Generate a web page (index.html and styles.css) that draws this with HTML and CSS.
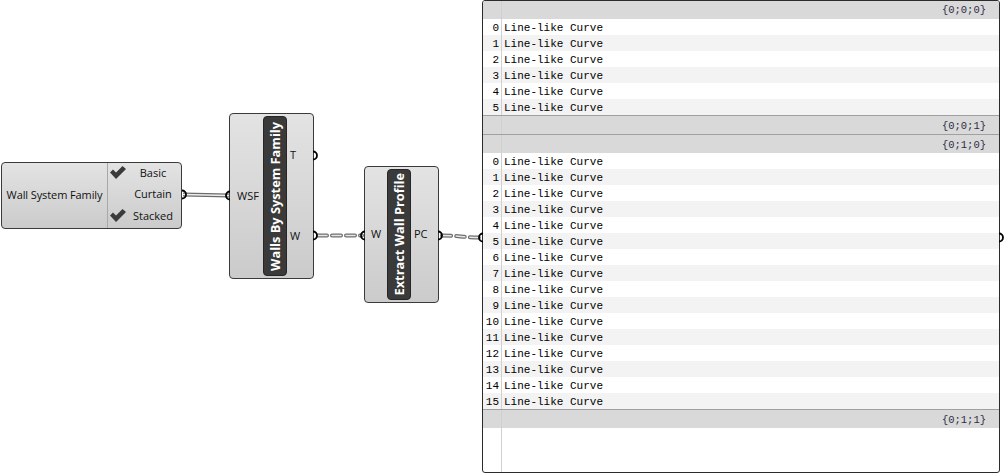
FILE: index.html
```html
<!DOCTYPE html>
<html>
<head>
<meta charset="utf-8">
<link rel="stylesheet" href="styles.css">
</head>
<body>
<div class="canvas">
  <div class="node wsf">
    <div class="wsf-name">Wall System Family</div>
    <div class="wsf-items">
      <div class="item"><svg class="check" viewBox="0 0 16 13"><polygon points="0,6.5 3,3.5 6,6.5 12.5,0 16,3 6,13"/></svg><span>Basic</span></div>
      <div class="item"><span class="check-empty"></span><span>Curtain</span></div>
      <div class="item"><svg class="check" viewBox="0 0 16 13"><polygon points="0,6.5 3,3.5 6,6.5 12.5,0 16,3 6,13"/></svg><span>Stacked</span></div>
    </div>
  </div>

  <div class="node walls">
    <div class="inputs walls-in"><span>WSF</span></div>
    <div class="bar"><span>Walls By System Family</span></div>
    <div class="outputs"><div class="port">T</div><div class="port">W</div></div>
  </div>

  <div class="node extract">
    <div class="inputs extract-in"><span>W</span></div>
    <div class="bar"><span>Extract Wall Profile</span></div>
    <div class="outputs"><div class="port">PC</div></div>
  </div>

  <div class="panel">
    <div class="row head first"><div class="idx"></div><div class="val path">{0;0;0}</div></div>
    <div class="row"><div class="idx">0</div><div class="val">Line-like Curve</div></div>
    <div class="row alt"><div class="idx">1</div><div class="val">Line-like Curve</div></div>
    <div class="row"><div class="idx">2</div><div class="val">Line-like Curve</div></div>
    <div class="row alt"><div class="idx">3</div><div class="val">Line-like Curve</div></div>
    <div class="row"><div class="idx">4</div><div class="val">Line-like Curve</div></div>
    <div class="row alt"><div class="idx">5</div><div class="val">Line-like Curve</div></div>
    <div class="row foot"><div class="idx"></div><div class="val path">{0;0;1}</div></div>
    <div class="row head sep"><div class="idx"></div><div class="val path">{0;1;0}</div></div>
    <div class="row"><div class="idx">0</div><div class="val">Line-like Curve</div></div>
    <div class="row alt"><div class="idx">1</div><div class="val">Line-like Curve</div></div>
    <div class="row"><div class="idx">2</div><div class="val">Line-like Curve</div></div>
    <div class="row alt"><div class="idx">3</div><div class="val">Line-like Curve</div></div>
    <div class="row"><div class="idx">4</div><div class="val">Line-like Curve</div></div>
    <div class="row alt"><div class="idx">5</div><div class="val">Line-like Curve</div></div>
    <div class="row"><div class="idx">6</div><div class="val">Line-like Curve</div></div>
    <div class="row alt"><div class="idx">7</div><div class="val">Line-like Curve</div></div>
    <div class="row"><div class="idx">8</div><div class="val">Line-like Curve</div></div>
    <div class="row alt"><div class="idx">9</div><div class="val">Line-like Curve</div></div>
    <div class="row"><div class="idx">10</div><div class="val">Line-like Curve</div></div>
    <div class="row alt"><div class="idx">11</div><div class="val">Line-like Curve</div></div>
    <div class="row"><div class="idx">12</div><div class="val">Line-like Curve</div></div>
    <div class="row alt"><div class="idx">13</div><div class="val">Line-like Curve</div></div>
    <div class="row"><div class="idx">14</div><div class="val">Line-like Curve</div></div>
    <div class="row alt"><div class="idx">15</div><div class="val">Line-like Curve</div></div>
    <div class="row foot"><div class="idx"></div><div class="val path">{0;1;1}</div></div>
    <div class="row filler"><div class="idx"></div><div class="val"></div></div>
  </div>

  <svg class="wires" width="1004" height="473" viewBox="0 0 1004 473">
    <g class="wire-outer">
      <path d="M183 194.5 L229 195.5"/>
    </g>
    <g class="wire-inner">
      <path d="M183 194.5 L229 195.5"/>
    </g>
    <g class="dash-outer">
      <path d="M318 235.5 L362 235.5"/>
      <path d="M442 235.5 C460 235.5 462 237.5 480 237.5"/>
    </g>
    <g class="dash-inner">
      <path d="M318 235.5 L362 235.5"/>
      <path d="M442 235.5 C460 235.5 462 237.5 480 237.5"/>
    </g>
    <g class="grips">
      <path d="M182 190.5 A4 4 0 0 1 182 198.5"/>
      <path d="M230 191.5 A4 4 0 0 0 230 199.5"/>
      <path d="M313 151.5 A4 4 0 0 1 313 159.5"/>
      <path d="M313 231.5 A4 4 0 0 1 313 239.5"/>
      <path d="M365 231.5 A4 4 0 0 0 365 239.5"/>
      <path d="M438 231.5 A4 4 0 0 1 438 239.5"/>
      <path d="M483 233.5 A4 4 0 0 0 483 241.5"/>
      <path d="M999 233.5 A4 4 0 0 1 999 241.5"/>
    </g>
  </svg>
</div>
</body>
</html>
```

FILE: styles.css
```css
html, body {
  margin: 0;
  padding: 0;
  background: #ffffff;
}

.canvas {
  position: relative;
  width: 1004px;
  height: 473px;
  overflow: hidden;
  font-family: "Open Sans", "Noto Sans", sans-serif;
  font-size: 11px;
  color: #111;
}

.node {
  position: absolute;
  box-sizing: border-box;
  border: 1px solid #3a3a3a;
  border-radius: 4px;
  background: linear-gradient(#e3e3e3, #cbcbcb);
  display: flex;
}

.wsf {
  left: 1px;
  top: 162px;
  width: 181px;
  height: 67px;
}

.wsf-name {
  width: 105px;
  border-right: 1px solid #a8a8a8;
  display: flex;
  align-items: center;
  justify-content: center;
  padding-bottom: 3px;
  letter-spacing: -0.1px;
}

.wsf-items {
  flex: 1;
  display: flex;
  flex-direction: column;
  justify-content: flex-start;
}

.item {
  height: 22px;
  flex: none;
  display: flex;
  align-items: center;
  padding-left: 2px;
  padding-bottom: 2px;
  box-sizing: border-box;
}

.item:first-child {
  height: 20px;
}

.item span:last-child {
  flex: 1;
  text-align: center;
  padding-right: 1px;
}

.check {
  width: 16px;
  height: 13px;
  fill: #3b3b3b;
  margin-top: 1px;
}

.check-empty {
  width: 16px;
}

.walls {
  left: 229px;
  top: 113px;
  width: 85px;
  height: 166px;
}

.extract {
  left: 364px;
  top: 166px;
  width: 75px;
  height: 137px;
}

.inputs {
  display: flex;
  align-items: center;
  padding-bottom: 2px;
}

.walls-in {
  width: 33px;
  padding-left: 7px;
  box-sizing: border-box;
}

.extract-in {
  width: 22px;
  padding-left: 6px;
  box-sizing: border-box;
}

.bar {
  width: 24px;
  margin: 2px 0;
  box-sizing: border-box;
  background: #3a3a3a;
  border: 1px solid #262626;
  border-radius: 4px;
  display: flex;
  align-items: center;
  justify-content: center;
}

.bar span {
  writing-mode: vertical-rl;
  transform: rotate(180deg);
  color: #ffffff;
  font-weight: 700;
  font-size: 12.8px;
  white-space: nowrap;
}

.outputs {
  flex: 1;
  display: flex;
  flex-direction: column;
  padding-bottom: 2px;
}

.port {
  flex: 1;
  display: flex;
  align-items: center;
  padding-left: 3px;
}

.panel {
  position: absolute;
  left: 482px;
  top: 0;
  width: 518px;
  height: 473px;
  box-sizing: border-box;
  border: 1px solid #2b2b2b;
  border-radius: 3px;
  background: #ffffff;
  display: flex;
  flex-direction: column;
  font-family: "Liberation Mono", monospace;
  font-size: 11px;
  color: #000;
  overflow: hidden;
}

.row {
  display: flex;
  height: 16px;
  line-height: 18px;
  flex: none;
}

.row.alt {
  background: #f3f3f3;
}

.idx {
  width: 19px;
  border-right: 1px solid #d0d0d0;
  text-align: right;
  padding-right: 2px;
  box-sizing: border-box;
  flex: none;
}

.val {
  flex: 1;
  padding-left: 2px;
  white-space: nowrap;
}

.row.head,
.row.foot {
  height: 18px;
  line-height: 20px;
  background: #d9d9d9;
}

.row.head.first {
  line-height: 19px;
}

.row.foot,
.row.sep {
  border-top: 1px solid #a0a0a0;
}

.path {
  text-align: right;
  padding-right: 13px;
  font-size: 10.5px;
  color: #2c2c44;
}

.row.filler {
  flex: 1;
}

.wires {
  position: absolute;
  left: 0;
  top: 0;
  pointer-events: none;
}

.wire-outer path {
  fill: none;
  stroke: #6b6b6b;
  stroke-width: 4;
}

.wire-inner path {
  fill: none;
  stroke: #eeeeee;
  stroke-width: 1.4;
}

.dash-outer path {
  fill: none;
  stroke: #6f6f6f;
  stroke-width: 4;
  stroke-dasharray: 9 5;
  stroke-linecap: round;
}

.dash-inner path {
  fill: none;
  stroke: #e6e6e6;
  stroke-width: 1.5;
  stroke-dasharray: 9 5;
  stroke-linecap: round;
}

.grips path {
  fill: none;
  stroke: #000000;
  stroke-width: 1.8;
}
```
